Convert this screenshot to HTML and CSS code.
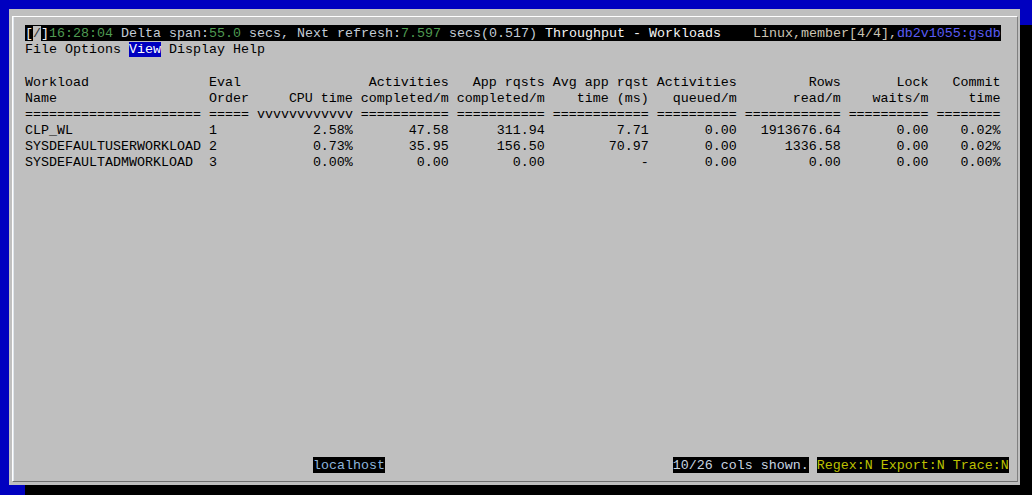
FILE: index.html
```html
<!DOCTYPE html>
<html>
<head>
<meta charset="utf-8">
<title>Throughput - Workloads</title>
<link rel="stylesheet" href="styles.css">
</head>
<body>
<div class="window">
  <div class="screen">
    <div class="titlebar"><span class="tb-w">[</span><span class="tb-cur">/</span><span class="tb-w">]</span><span class="tb-g">16:28:04</span><span class="tb-l"> Delta span:</span><span class="tb-g">55.0</span><span class="tb-l"> secs, Next refresh:</span><span class="tb-g">7.597</span><span class="tb-l"> secs(0.517) </span><span class="tb-t">Throughput - Workloads</span><span class="tb-l">    </span><span class="tb-h">Linux,member[4/4],</span><span class="tb-b">db2v1055:gsdb</span></div>
    <div class="menu">File Options <span class="sel">View</span> Display Help</div>
    <div class="table">
      <span>Workload</span><span>Eval</span><span></span><span class="r">Activities</span><span class="r">App rqsts</span><span class="r">Avg app rqst</span><span class="r">Activities</span><span class="r">Rows</span><span class="r">Lock</span><span class="r">Commit</span>
      <span>Name</span><span>Order</span><span class="r">CPU time</span><span class="r">completed/m</span><span class="r">completed/m</span><span class="r">time (ms)</span><span class="r">queued/m</span><span class="r">read/m</span><span class="r">waits/m</span><span class="r">time</span>
      <span>======================</span><span>=====</span><span>vvvvvvvvvvvv</span><span>===========</span><span>===========</span><span>============</span><span>==========</span><span>============</span><span>==========</span><span>========</span>
      <span>CLP_WL</span><span>1</span><span class="r">2.58%</span><span class="r">47.58</span><span class="r">311.94</span><span class="r">7.71</span><span class="r">0.00</span><span class="r">1913676.64</span><span class="r">0.00</span><span class="r">0.02%</span>
      <span>SYSDEFAULTUSERWORKLOAD</span><span>2</span><span class="r">0.73%</span><span class="r">35.95</span><span class="r">156.50</span><span class="r">70.97</span><span class="r">0.00</span><span class="r">1336.58</span><span class="r">0.00</span><span class="r">0.02%</span>
      <span>SYSDEFAULTADMWORKLOAD</span><span>3</span><span class="r">0.00%</span><span class="r">0.00</span><span class="r">0.00</span><span class="r">-</span><span class="r">0.00</span><span class="r">0.00</span><span class="r">0.00</span><span class="r">0.00%</span>
    </div>
    <div class="status"><span class="st-host">localhost</span><span class="st-cols">10/26 cols shown.</span><span class="st-flags">Regex:N Export:N Trace:N</span></div>
  </div>
</div>
</body>
</html>
```
FILE: styles.css
```css
* { box-sizing: border-box; }
html, body { margin: 0; padding: 0; }
body {
  background: #0000c0;
  width: 1032px;
  height: 495px;
  overflow: hidden;
  font-family: "Liberation Mono", "DejaVu Sans Mono", monospace;
  font-size: 13.333px;
  line-height: 16px;
  color: #000;
}
.window {
  margin: 9px 0 0 9px;
  width: 1011px;
  height: 476px;
  background: #bfbfbf;
  box-shadow: 16px 16px 0 #000;
  padding: 7px 2px 3px 3px;
}
.screen {
  height: 100%;
  border-top: 1px solid #ffffff;
  border-left: 1px solid #ffffff;
  border-right: 1px solid #808080;
  border-bottom: 1px solid #707070;
  box-shadow: inset 1px 0 0 #dfe5ec;
  padding: 8px 0 8px 12px;
  display: flex;
  flex-direction: column;
}
.titlebar, .menu, .status { white-space: pre; height: 16px; }
.titlebar { background: #000; align-self: flex-start; padding-top: 1px; }
.menu { padding-top: 1px; }
.tb-w { color: #f0f0f0; }
.tb-cur { color: #303030; background: #bfbfbf; }
.tb-g { color: #4f9a52; }
.tb-l { color: #c4ccd6; }
.tb-t { color: #f4f4f4; }
.tb-h { color: #cbc4b4; }
.tb-b { color: #5a5cf4; }
.menu .sel { background: #0000c0; color: #fff; }
.table {
  margin-top: 17px;
  display: grid;
  grid-template-columns: 22ch 5ch 12ch 11ch 11ch 12ch 10ch 12ch 10ch 8ch;
  column-gap: 1ch;
  white-space: pre;
}
.table span { height: 16px; padding-top: 1px; }
.table .r { text-align: right; }
.status { margin-top: auto; display: flex; }
.status span { background: #000; height: 16px; padding-top: 1px; }
.st-host { margin-left: 36ch; color: #8db4dc; }
.st-cols { margin-left: 36ch; color: #c8d4e0; }
.st-flags { margin-left: 1ch; color: #bcc000; }
```
